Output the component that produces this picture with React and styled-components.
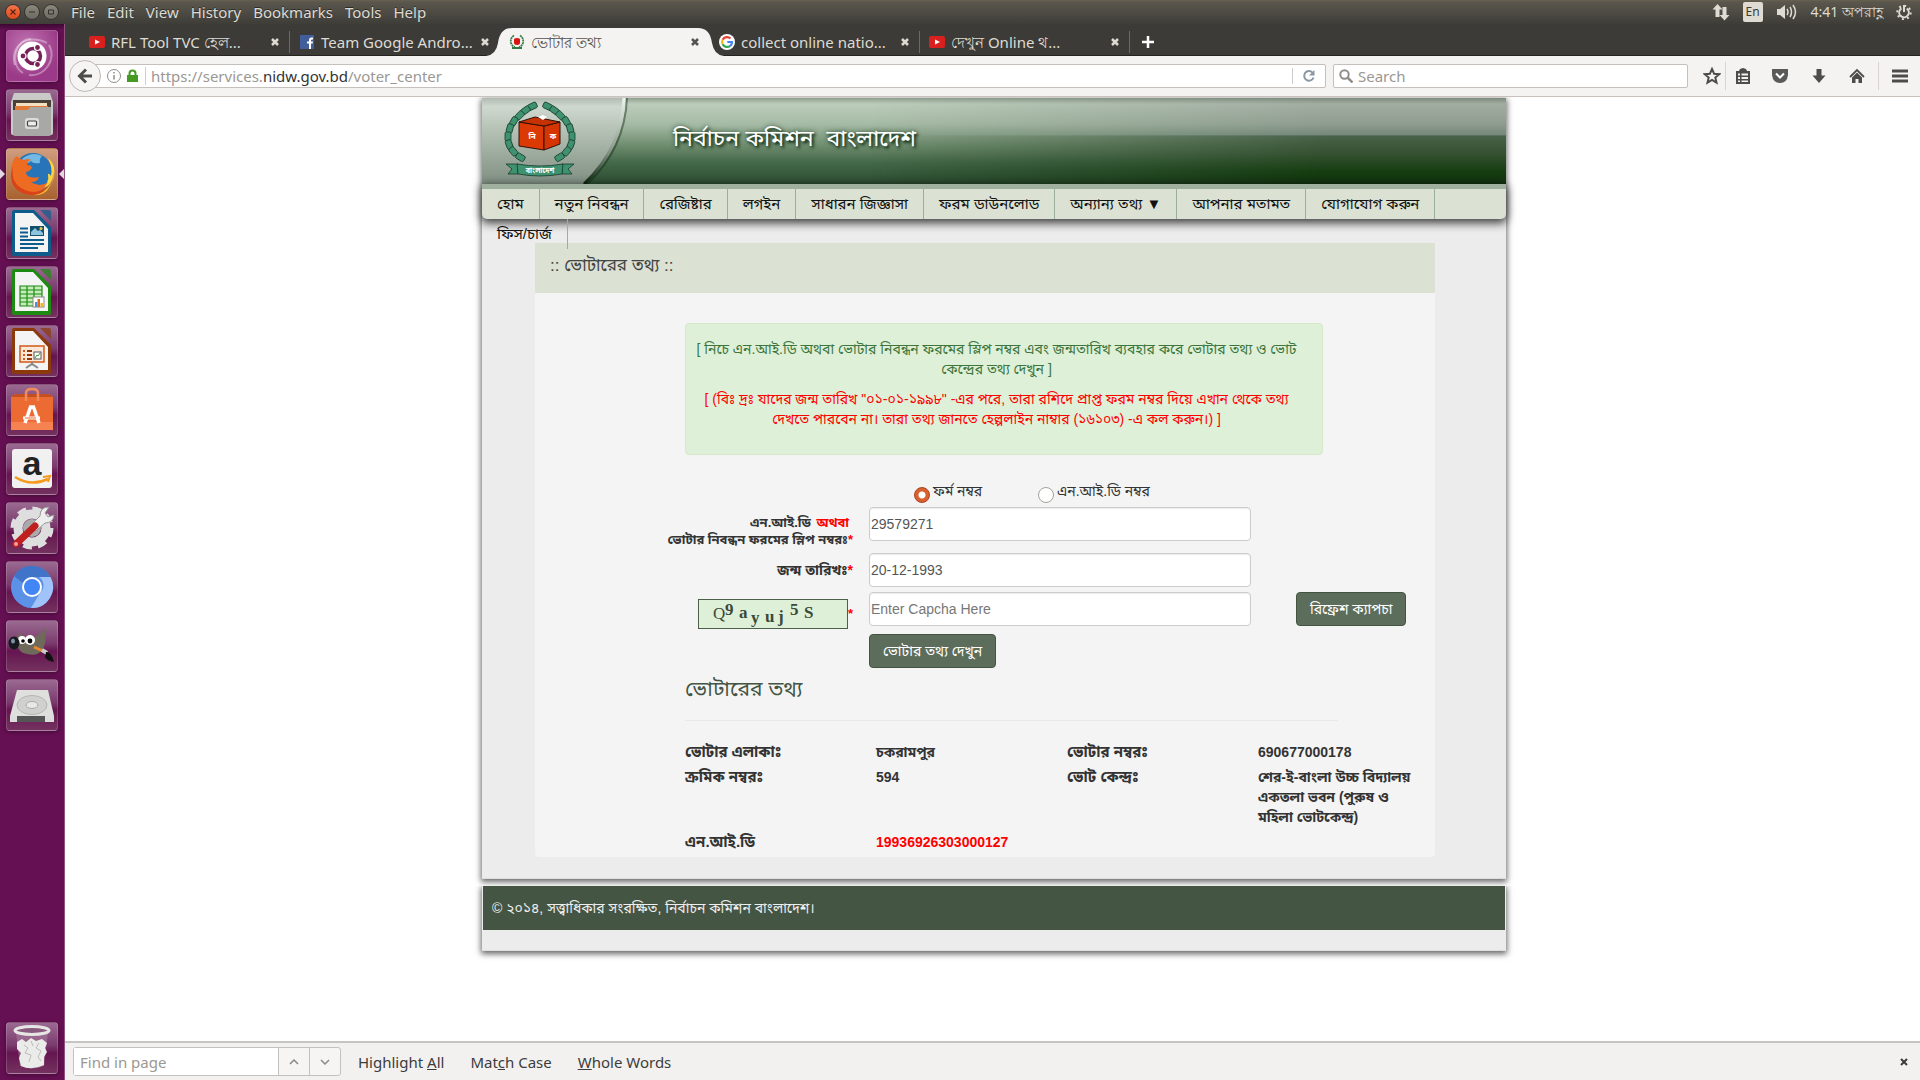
import React, { useState } from "react";
import styled, { createGlobalStyle, css } from "styled-components";

const uiFont = `"Noto Sans", "Open Sans", sans-serif`;
const pageFont = `"Liberation Sans", "Noto Sans Bengali", "Noto Sans", sans-serif`;

const GlobalStyle = createGlobalStyle`
  * { box-sizing: border-box; }
  body { margin: 0; background: #fff; }
  button, input { font: inherit; }
`;

/* ---------- desktop ---------- */

const Desktop = styled.div`
  display: flex;
  flex-direction: column;
  height: 100vh;
  font-family: ${uiFont};
  font-size: 15px;
`;

const MenuBar = styled.header`
  display: flex;
  align-items: center;
  flex: none;
  height: 24px;
  padding: 0 8px 0 5px;
  background: linear-gradient(#66614f 0, #5b574e 2px, #3e3d38 100%);
  color: #dfdbd2;
`;

const WindowButtons = styled.div`
  display: flex;
  gap: 3px;
  margin-right: 12px;
`;

const WindowButton = styled.button`
  display: grid;
  place-items: center;
  width: 16px;
  height: 16px;
  padding: 0;
  border: 1px solid #34332e;
  border-radius: 50%;
  background: ${(p) => (p.$close ? "linear-gradient(#f4734a, #df4a1c)" : "linear-gradient(#8b887c, #6c6a61)")};
`;

const Menus = styled.nav`
  display: flex;
  gap: 12px;
  flex: 1;
`;

const MenuButton = styled.button`
  padding: 0;
  border: 0;
  background: none;
  color: inherit;
  line-height: 20px;
  text-shadow: 0 -1px 0 #2c2b27;
`;

const Indicators = styled.div`
  display: flex;
  align-items: center;
  gap: 13px;
`;

const Keyboard = styled.span`
  width: 20px;
  height: 20px;
  border-radius: 2px;
  background: #dfdbd2;
  color: #3c3b37;
  font-size: 12px;
  line-height: 20px;
  text-align: center;
`;

const Clock = styled.time`
  font-size: 14px;
  line-height: 20px;
  white-space: nowrap;
`;

const Workspace = styled.div`
  display: flex;
  flex: 1;
  min-height: 0;
`;

const Launcher = styled.aside`
  display: flex;
  flex-direction: column;
  flex: none;
  gap: 7px;
  width: 65px;
  padding: 6px 6px 6px;
  border-right: 1px solid #8f5382;
  background: linear-gradient(#3a0830 0, #651052 6px);
`;

const Tile = styled.button`
  position: relative;
  width: 52px;
  height: 52px;
  padding: 0;
  border: 1px solid rgba(255, 255, 255, 0.17);
  border-radius: 4px;
  background: ${(p) => p.$bg || "linear-gradient(#9a6a91 0, #7a3a6d 45%, #651550 60%, #74325f 100%)"};
  box-shadow: 0 1px 4px rgba(0, 0, 0, 0.35);
  ${(p) => p.$last && css`margin-top: auto;`}
  svg { display: block; width: 50px; height: 50px; }
  ${(p) => p.$active && css`
    &::before, &::after {
      content: "";
      position: absolute;
      top: 20px;
      border: 5px solid transparent;
    }
    &::before { left: -7px; border-left-color: #e2d8df; border-right: 0; }
    &::after { right: -7px; border-right-color: #e2d8df; border-left: 0; }
  `}
`;

const Browser = styled.section`
  display: flex;
  flex-direction: column;
  flex: 1;
  min-width: 0;
`;

/* ---------- browser chrome ---------- */

const TabStrip = styled.div`
  display: flex;
  flex: none;
  height: 32px;
  padding-left: 15px;
  background: #3d3b37;
  box-shadow: inset 0 -1px 0 #252420;
`;

const TabBox = styled.div`
  position: relative;
  display: flex;
  align-items: center;
  gap: 6px;
  flex: 0 1 210px;
  min-width: 0;
  padding: 4px 8px 0 9px;
  color: ${(p) => (p.$active ? "#55534f" : "#dedbd3")};
  ${(p) => !p.$active && !p.$beforeActive && css`
    background: linear-gradient(#6c6a65, #6c6a65) right 7px / 1px 22px no-repeat;
  `}
`;

const TabShape = styled.svg`
  position: absolute;
  left: -14px;
  top: 4px;
  width: 238px;
  height: 28px;
`;

const TabIcon = styled.span`
  position: relative;
  display: flex;
  flex: none;
  width: 16px;
`;

const TabLabel = styled.span`
  position: relative;
  flex: 1;
  min-width: 0;
  line-height: 22px;
  white-space: nowrap;
`;

const CloseButton = styled.button`
  position: relative;
  display: grid;
  place-items: center;
  flex: none;
  width: 14px;
  height: 14px;
  padding: 0;
  border: 0;
  background: none;
  color: inherit;
`;

const NewTab = styled(CloseButton)`
  width: 36px;
  height: 32px;
  padding-top: 3px;
  color: #fff;
`;

const Toolbar = styled.div`
  display: flex;
  align-items: center;
  flex: none;
  height: 41px;
  padding: 0 0 0 4px;
  border-bottom: 1px solid #c9c1bb;
  background: #f4f3f1;
  color: #4a4a4a;
`;

const BackButton = styled.button`
  position: relative;
  z-index: 1;
  display: grid;
  place-items: center;
  flex: none;
  width: 32px;
  height: 32px;
  margin-right: -10px;
  padding: 0;
  border: 1px solid #bdb9b5;
  border-radius: 50%;
  background: #f6f5f4;
`;

const UrlBar = styled.div`
  display: flex;
  align-items: center;
  flex: 1;
  height: 24px;
  padding-left: 15px;
  border: 1px solid #c5c0bb;
  border-radius: 2px;
  background: #fff;
  color: #9b9893;
`;

const UrlText = styled.span`
  flex: 1;
  margin-left: 6px;
  padding-left: 5px;
  border-left: 1px solid #cfcdca;
  line-height: 18px;
  b { color: #333; font-weight: 400; }
`;

const Reload = styled.button`
  display: grid;
  place-items: center;
  width: 33px;
  height: 16px;
  padding: 0;
  border: 0;
  border-left: 1px solid #cfcdca;
  background: none;
`;

const SearchBox = styled.label`
  display: flex;
  align-items: center;
  gap: 5px;
  width: 355px;
  height: 24px;
  margin: 0 10px 0 7px;
  padding-left: 5px;
  border: 1px solid #c5c0bb;
  border-radius: 2px;
  background: #fff;
`;

const PlainInput = styled.input`
  flex: 1;
  min-width: 0;
  padding: 0;
  border: 0;
  outline: 0;
  background: none;
  color: #4a4a4a;
  &::placeholder { color: #9b9893; opacity: 1; }
`;

const ToolButton = styled.button`
  display: grid;
  place-items: center;
  width: ${(p) => p.$w || 38}px;
  height: 28px;
  padding: 0;
  border: 0;
  ${(p) => p.$divided && css`border-left: 1px solid #d8d5d2;`}
  background: none;
  color: #4c4c4c;
`;

const FindBar = styled.div`
  display: flex;
  align-items: center;
  flex: none;
  height: 39px;
  padding: 0 9px 0 8px;
  border-top: 2px solid #c7c5c1;
  background: #f2f1ef;
  color: #3c3c3c;
`;

const FindGroup = styled.div`
  display: flex;
  height: 29px;
  margin-right: 17px;
  border: 1px solid #c3c1bd;
  border-radius: 3px;
  background: #f6f5f4;
`;

const FindInput = styled(PlainInput)`
  flex: none;
  width: 204px;
  padding-left: 6px;
  background: #fff;
`;

const FindStep = styled.button`
  display: grid;
  place-items: center;
  width: 31px;
  padding: 0;
  border: 0;
  border-left: 1px solid #c3c1bd;
  background: none;
`;

const FindOption = styled.button`
  margin-right: 26px;
  padding: 0;
  border: 0;
  background: none;
  color: inherit;
  line-height: 20px;
`;

const Spacer = styled.span`
  flex: 1;
`;

/* ---------- web page ---------- */

const Page = styled.main`
  flex: 1;
  min-height: 0;
  overflow: hidden;
  padding: 1px 0 0 3px;
  background: #fff;
  color: #333;
  font-family: ${pageFont};
  font-size: 14px;
  line-height: 20px;
`;

const Sheet = styled.div`
  max-width: 1024px;
  margin: 0 auto;
  padding-bottom: 21px;
  border-bottom: 1px solid #ddd;
  background: #ececec;
  box-shadow: 0 2px 6px 1px rgba(0, 0, 0, 0.6);
`;

const Banner = styled.div`
  position: relative;
  display: flex;
  align-items: center;
  height: 86px;
  background: linear-gradient(#8fa08f 0, #bccdbb 6px, #a6bba6 30%, #6f8d6f 55%, #44684a 75%, #2c4c31 100%);
  &::before {
    content: "";
    position: absolute;
    inset: 0;
    background: linear-gradient(#7d8a7c 0, #a1ada1 6px, #8f9d8f 30%, #75887a 43%, #49624a 44%, #33502f 66%, #153c10 86%, #12330f 100%);
    mask-image: linear-gradient(90deg, transparent 38%, #000 82%);
  }
`;

const Emblem = styled.svg`
  position: relative;
  width: 150px;
  height: 86px;
`;

const SiteTitle = styled.h1`
  position: relative;
  margin: 0 0 6px 41px;
  color: #fff;
  font-size: 23px;
  font-weight: 400;
  line-height: 36px;
  text-shadow: 2px 2px 3px #143016, 0 0 5px #24452a;
`;

const SiteNav = styled.nav`
  position: relative;
  height: 35px;
  border-top: 5px solid #9fb09f;
  border-radius: 0 0 5px 5px;
  background: #dbe1d3;
  box-shadow: 0 3px 10px 1px rgba(0, 0, 0, 0.75);
`;

const NavList = styled.ul`
  display: flex;
  flex-wrap: wrap;
  margin: 0;
  padding: 0;
  list-style: none;
`;

const NavLink = styled.a`
  display: block;
  height: 30px;
  padding: 0 15px;
  border-right: 1px solid #9bb09c;
  color: #111;
  font-size: 15px;
  line-height: 29px;
  text-decoration: none;
  white-space: nowrap;
`;

const Panel = styled.section`
  margin: 24px 71px 0 53px;
  border-radius: 0 0 4px 4px;
  background: #f4f4f4;
`;

const PanelTitle = styled.h2`
  height: 50px;
  margin: 0 0 30px;
  padding: 12px 15px;
  background: #dbe1d3;
  color: #444;
  font-size: 17px;
  font-weight: 400;
  line-height: 22px;
`;

const Notice = styled.div`
  max-width: 638px;
  height: 132px;
  margin: 0 112px 26px 150px;
  padding: 15px 21px 0 6px;
  border: 1px solid #d6e9c6;
  border-radius: 4px;
  background: #dff0d8;
  color: #3c763d;
  text-align: center;
  p { margin: 0 0 10px; white-space: nowrap; }
  p + p { color: #f00; }
`;

const Choices = styled.div`
  display: flex;
  height: 26px;
  padding-left: 379px;
`;

const Choice = styled.label`
  display: flex;
  gap: 3px;
  width: 124px;
  line-height: 20px;
  white-space: nowrap;
`;

const Radio = styled.input`
  appearance: none;
  flex: none;
  width: 16px;
  height: 16px;
  margin: 6px 0 0;
  border: 1px solid #a6a19b;
  border-radius: 50%;
  background: #fff;
  &:checked {
    border-color: #a8431d;
    background: radial-gradient(circle, #fff 0 3px, #d9602f 4px);
  }
`;

const Fields = styled.div`
  display: grid;
  grid-template-columns: 318px minmax(0, 382px) auto;
  column-gap: 16px;
  row-gap: 5px;
  align-items: start;
`;

const Required = styled.span`
  color: #f00;
`;

const FieldLabel = styled.label`
  padding-top: 7px;
  font-size: ${(p) => (p.$small ? 13 : 14)}px;
  font-weight: 700;
  line-height: ${(p) => (p.$small ? 17 : 20)}px;
  text-align: right;
  white-space: nowrap;
`;

const Accent = styled.span`
  margin: 0 4px 0 2px;
  color: #f00;
`;

const TextInput = styled.input`
  width: 100%;
  height: 34px;
  padding: 0 1px;
  border: 1px solid #ccc;
  border-radius: 4px;
  background: #fff;
  box-shadow: inset 0 1px 1px rgba(0, 0, 0, 0.08);
  color: #555;
  &::placeholder { color: #777; opacity: 1; }
`;

const Button = styled.button`
  justify-self: start;
  height: 34px;
  padding: 0 13px;
  border: 1px solid #435541;
  border-radius: 4px;
  background: #5d6d5b;
  color: #fff;
  line-height: 20px;
  white-space: nowrap;
  ${(p) => p.$apart && css`margin-left: 29px;`}
  ${(p) => p.$wide && css`grid-column: 2;`}
`;

const CaptchaCell = styled.label`
  display: flex;
  align-items: center;
  justify-content: flex-end;
  padding-top: 7px;
  font-size: 13px;
  font-weight: 700;
`;

const Captcha = styled.svg`
  width: 150px;
  height: 30px;
  border: 1px solid #4c5f48;
  background: #dff0d8;
  font-family: "Liberation Serif", serif;
  font-size: 17px;
`;

const SectionTitle = styled.h3`
  margin: 10px 0 0 150px;
  color: #445544;
  font-size: 21px;
  font-weight: 400;
  line-height: 22px;
`;

const Rule = styled.hr`
  margin: 20px 97px 21px 150px;
  border: 0;
  border-top: 1px solid #e9e9e9;
`;

const VoterTable = styled.table`
  width: calc(100% - 150px);
  margin-left: 150px;
  border-collapse: collapse;
  table-layout: fixed;
  th, td {
    width: 191px;
    padding: 0 0 5px;
    font-weight: 700;
    text-align: left;
    vertical-align: top;
    white-space: nowrap;
  }
  th { font-size: 15px; }
  th:last-child, td:last-child { width: auto; }
`;

const FooterSheet = styled.footer`
  max-width: 1024px;
  margin: 7px auto 0;
  padding: 0 1px 20px;
  border-bottom: 1px solid #ddd;
  background: #ececec;
  box-shadow: 0 2px 6px 1px rgba(0, 0, 0, 0.6);
  clip-path: inset(0 -10px -14px -10px);
`;

const Copyright = styled.p`
  height: 44px;
  margin: 0;
  padding: 0 9px;
  background: #445544;
  color: #eee;
  line-height: 44px;
`;

/* ---------- drawings ---------- */

const DashIcon = () => (
  <svg viewBox="0 0 50 50">
    <g fill="none" stroke="#fff" strokeOpacity=".35" strokeWidth="2">
      <path d="M8 34C2 14 22 2 40 12" /><path d="M16 42c-14-8-8-34 8-34" /><path d="M42 14c8 14-4 32-20 30" />
    </g>
    <circle cx="25" cy="25" r="14.500" fill="#fff" />
    <circle cx="26" cy="25" r="7.500" fill="none" stroke="#772159" strokeWidth="3.500" />
    <g fill="#772159" stroke="#fff" strokeWidth="1.200"><circle cx="16" cy="25" r="3" /><circle cx="30.500" cy="16.500" r="3" /><circle cx="30.500" cy="33.500" r="3" /></g>
  </svg>
);

const FilesIcon = () => (
  <svg viewBox="0 0 50 50">
    <path d="M7 3h36l3 9v31q0 2-2 2H6q-2 0-2-2V12z" fill="#c9c9c7" />
    <path d="M6 10h38v12H6z" fill="#4a4038" /><path d="M9 13h31v6H9z" fill="#f4dfc0" /><path d="M8 16h33v5H8z" fill="#e27a35" />
    <path d="M6 20h15l2-3h21v27q0 2-2 2H8q-2 0-2-2z" fill="#a8a8a6" />
    <rect x="18" y="28" width="14" height="11" rx="2.500" fill="#dcdcda" /><rect x="20.500" y="31" width="9" height="5" rx="1" fill="#eee" stroke="#444" strokeWidth="1.200" />
  </svg>
);

const FirefoxIcon = () => (
  <svg viewBox="0 0 50 50">
    <circle cx="26" cy="23" r="19" fill="#2874b8" /><path d="M15 10q10-8 20-3-3 3-2 7-7 1-9-2-4 5-9-2z" fill="#73b9e4" />
    <path d="M41 9q5 10 3 18-2-3-3-2 2 10-8 14 12 0 14-16Q47 41 28 46 50 40 47 18q-2-6-6-9z" fill="#ffd53d" />
    <path d="M43 12q6 12 1 22-6 11-18 12Q44 48 46 24q0-7-3-12z" fill="#f9b52f" />
    <path d="M9 7q4 3 8 4 4-2 7 0-4 1-4 5 5 0 5 3-2 3-6 4 0 4 4 5 6 1 9 0-1 5-8 5 9 6 17 0Q35 44 24 44 5 42 4 23 4 14 9 7z" fill="#ee6b22" />
    <path d="M6 17Q3 35 18 41q12 5 22-3-6 9-17 8Q3 43 4 24z" fill="#d8431a" />
  </svg>
);

const docIcon = (color, content) => (
  <svg viewBox="0 0 50 50">
    <path d="M7 2h20l17 17v27q0 2-2 2H7q-2 0-2-2V4q0-2 2-2z" fill={color} />
    <path d="M33 2h9q2 0 2 2v9z" fill={color} opacity=".7" />
    <path d="M8 5h18l15 16v23H8z" fill="#f4f4f4" />
    {content}
  </svg>
);

const WriterIcon = () => docIcon("#0e5c8c", <>
  <path d="M13 19.500h8M13 23.500h8M13 27.500h8M13 31h24M13 35h24M13 39h18" transform="translate(0 1)" stroke="#0e5c8c" strokeWidth="2" />
  <rect x="23" y="18" width="14" height="10" fill="#12506e" /><path d="M24 27v-3l4-4 3 3 2-1 3 3v2z" fill="#8cc4e0" /><circle cx="34" cy="20.500" r="1.500" fill="#f6c83c" />
</>);

const CalcIcon = () => docIcon("#1d8a12", <>
  <rect x="13" y="19" width="22" height="20" fill="#c4ecb8" /><path d="M13 19h22v20H13zM13 23h22M13 27h22M13 31h22M13 35h22M20 19v20M27 19v20" fill="none" stroke="#1d8a12" strokeWidth="1.200" />
  <rect x="26" y="30" width="11" height="10" fill="#fff" stroke="#888" /><path d="M28 40v-5h2.500v5z" fill="#4a90d9" /><path d="M30.500 40v-8H33v8z" fill="#e06a1e" /><path d="M33.500 40v-4H36v4z" fill="#edb52c" />
</>);

const ImpressIcon = () => docIcon("#8c3a0c", <>
  <rect x="13" y="20" width="24" height="16" fill="#fde7d8" stroke="#cf5a17" strokeWidth="1.500" />
  <path d="M16 25h2M16 29h2M16 33h2" stroke="#cf5a17" strokeWidth="2" /><path d="M20 25h5M20 29h5M20 33h5" stroke="#8c3a0c" strokeWidth="2" />
  <rect x="27" y="26" width="7" height="7" fill="#fff" stroke="#555" /><path d="M28 32l2-3 1 1 2-3" fill="none" stroke="#32a32a" /><path d="M25 36v3M19 42l6-4 6 4" fill="none" stroke="#888" strokeWidth="2" />
</>);

const SoftwareIcon = () => (
  <svg viewBox="0 0 50 50">
    <path d="M4 12l4-3h34l4 3v33H4z" fill="#ec6b33" /><path d="M4 12l4-3h34l4 3z" fill="#c54f1e" /><path d="M4 37h42v8H4z" fill="#f58250" />
    <path d="M19 16V8q0-4 6-4t6 4v8" fill="none" stroke="#f08a5f" strokeWidth="2.500" />
    <path d="M18 38l5.500-16h3L32 38" fill="none" stroke="#fff" strokeWidth="3.500" /><path d="M16 33h17" stroke="#fff" strokeWidth="3" /><path d="M18 33h11" stroke="#ec6b33" strokeWidth="1" />
  </svg>
);

const AmazonIcon = () => (
  <svg viewBox="0 0 50 50">
    <rect x="5" y="5" width="40" height="39" rx="3" fill="#f1f1f1" />
    <text x="25" y="31" textAnchor="middle" fontFamily="Liberation Sans, sans-serif" fontWeight="700" fontSize="34" fill="#222">a</text>
    <path d="M8 33q16 10 33 2" fill="none" stroke="#f7981d" strokeWidth="2.500" /><path d="M36 33l7-1-2 6" fill="none" stroke="#f7981d" strokeWidth="2" />
  </svg>
);

const SettingsIcon = () => (
  <svg viewBox="0 0 50 50">
    <circle cx="25" cy="25" r="18.500" fill="none" stroke="#dedede" strokeWidth="6" strokeDasharray="8.500 6" />
    <circle cx="25" cy="25" r="14" fill="none" stroke="#dedede" strokeWidth="9" /><circle cx="25" cy="25" r="9" fill="#aaa" />
    <path d="M24 22l9-9q0-9 9-9l-4 6 3 4 6-2q-1 8-9 8l-9 8z" fill="#eee" stroke="#999" /><path d="M9 41l19-18" stroke="#c01f1f" strokeWidth="7" strokeLinecap="round" /><circle cx="9" cy="41" r="2" fill="#f6a0a0" />
  </svg>
);

const ChromiumIcon = () => (
  <svg viewBox="0 0 50 50">
    <circle cx="25" cy="25" r="21" fill="#5c91e8" /><path d="M7 14A21 21 0 0 1 43.500 15H25a10 10 0 0 0-9 6z" fill="#3f74c8" />
    <path d="M43.500 15A21 21 0 0 1 24 46l9-15a10 10 0 0 0-1-16z" fill="#a0c3fb" /><circle cx="25" cy="25" r="10" fill="#fff" /><circle cx="25" cy="25" r="8" fill="#4285f4" />
  </svg>
);

const GimpIcon = () => (
  <svg viewBox="0 0 50 50">
    <path d="M10 22l2-12q3 5 8 7 12 1 18-11 2 14-2 22-5 8-16 5-9-1-10-11z" fill="#6f695c" />
    <circle cx="15" cy="19" r="4" fill="#fff" /><circle cx="23" cy="19" r="5" fill="#fff" /><circle cx="16" cy="20" r="1.800" /><circle cx="23" cy="20" r="2.400" />
    <ellipse cx="7" cy="22" rx="5.500" ry="6.500" fill="#16191d" /><ellipse cx="6" cy="20" rx="2" ry="2.500" fill="#7d93a4" />
    <path d="M27 26l9 4" stroke="#e8892b" strokeWidth="3" /><path d="M35 29l5 3" stroke="#ccc" strokeWidth="4" /><path d="M39 31q5-1 8 10-7-1-9-5z" fill="#111" />
  </svg>
);

const DriveIcon = () => (
  <svg viewBox="0 0 50 50">
    <path d="M10 10h31l6 26H3z" fill="#dfdfdd" /><path d="M3 36h44v6H3z" fill="#555" /><path d="M3 36h7v6H3zM38 36h9v6h-9z" fill="#ddd" />
    <ellipse cx="25" cy="25" rx="15" ry="9.500" fill="#d0d0ce" stroke="#b5b5b3" /><ellipse cx="25" cy="25" rx="6" ry="3.500" fill="#e8e8e8" stroke="#aaa" />
  </svg>
);

const TrashIcon = () => (
  <svg viewBox="0 0 50 50">
    <path d="M9 9l4 34q12 5 24 0l4-34z" fill="#a67c9c" fillOpacity=".6" />
    <path d="M10 19l5-3 4 3 5-4 5 3 6-2 5 4-2 5 2 4-3 5v8q-12 6-23 1l-2-8 2-5-4-4z" fill="#ebebe9" /><path d="M17 22l4 3-3 5 6 2-2 7M32 20l-3 5 5 3-3 6 3 4M24 18l2 5" fill="none" stroke="#bbb" />
    <ellipse cx="25" cy="7.500" rx="17" ry="4" fill="#8a5a7e" stroke="#e6e6e4" strokeWidth="3" />
  </svg>
);

const Cross = ({ size = 8, width = 2.5 }) => (
  <svg width={size} height={size} viewBox="0 0 8 8"><path d="M1 1l6 6M7 1L1 7" stroke="currentColor" strokeWidth={width} /></svg>
);

const YouTubeIcon = () => (
  <svg width="16" height="14" viewBox="0 0 16 14"><rect y="1" width="16" height="12" rx="2" fill="#d8201f" /><path d="M6 4.500l5 2.500-5 2.500z" fill="#fff" /></svg>
);
const FacebookIcon = () => (
  <svg width="16" height="16" viewBox="0 0 16 16"><rect x="1" y="1" width="14" height="14" fill="#415e9b" /><path d="M10 15V9.500H8v-2h2V6q0-2.500 2.500-2.500H14v2h-1q-1 0-1 1v1h2l-.4 2H12V15z" fill="#fff" /></svg>
);
const GoogleIcon = () => (
  <svg width="16" height="16" viewBox="0 0 16 16"><circle cx="8" cy="8" r="8" fill="#fff" />
    <g fill="none" strokeWidth="2.200"><path d="M11.500 4.500A5 5 0 0 0 3.600 5.700" stroke="#ea4335" /><path d="M3.600 5.700a5 5 0 0 0 0 4.600" stroke="#fbbc05" /><path d="M3.600 10.300a5 5 0 0 0 7.600 1.500" stroke="#34a853" /><path d="M11.200 11.800A5 5 0 0 0 13 8H8.300" stroke="#4285f4" /></g></svg>
);
const CommissionIcon = () => (
  <svg width="16" height="16" viewBox="0 0 16 16"><path d="M5 1.500Q1 4 2 9q1 3 4 4M11 1.500q4 2.500 3 7.500-1 3-4 4" fill="none" stroke="#3b7d4d" strokeWidth="1.800" strokeDasharray="2 .6" /><path d="M5 5.500Q5 4 8 4t3 1.500v3Q11 11 8 11T5 8.500z" fill="#d9140e" /><path d="M3 13h10v2H3z" fill="#2f7a45" /></svg>
);

const leaves = [
  [51, 8, -25], [44, 12, -35], [38, 17, -45], [32, 23, -60], [28, 30, -75], [26, 38, -90], [27, 46, -110], [31, 53, -130], [38, 59, -150],
];

const EmblemArt = () => (
  <Emblem viewBox="0 0 150 86" role="img" aria-label="বাংলাদেশ নির্বাচন কমিশন">
    <defs>
      <linearGradient id="silver" x1="0" y1="0" x2="0" y2="1"><stop offset="0" stopColor="#b1bbb1" /><stop offset=".1" stopColor="#cfd8cf" /><stop offset=".4" stopColor="#b3bfb3" /><stop offset="1" stopColor="#7f8f82" /></linearGradient>
      <linearGradient id="edge" x1="0" y1="0" x2="0" y2="1"><stop offset="0" stopColor="#eef3ee" /><stop offset=".6" stopColor="#8c9a8c" /><stop offset="1" stopColor="#0b240d" /></linearGradient>
    </defs>
    <path d="M0 0h146q-2 50-39 86H0z" fill="#0e2a10" opacity=".45" />
    <path d="M0 0h144q-2 50-41 86H0z" fill="url(#silver)" />
    <path d="M142 0q-2 50-40 86" fill="none" stroke="url(#edge)" strokeWidth="3" />
    <g fill="#3f9270" stroke="#173a2b" strokeWidth=".8">
      {leaves.map(([x, y, r]) => (
        <React.Fragment key={y}>
          <rect x={x - 5} y={y - 3} width="9" height="6" rx="1.500" transform={`rotate(${r} ${x} ${y})`} />
          <rect x={112 - x} y={y - 3} width="9" height="6" rx="1.500" transform={`rotate(${-r} ${116 - x} ${y})`} />
        </React.Fragment>
      ))}
      <path d="M24 66h12v10H26l4-5zM92 66H80v10h10l-4-5z" />
      <path d="M35 66q23 4 46 0l-1 10q-22 4-44 0z" />
    </g>
    <g stroke="#321008" strokeWidth="1"><path d="M37 24l25 4v24l-25-4z" fill="#dc3a04" /><path d="M62 28l16-4v22l-16 6z" fill="#d43503" /><path d="M37 24l16-5 25 5-16 4z" fill="#c63204" /></g>
    <path d="M56 19l5-2 4 2-4 3z" fill="#fff" />
    <g fill="#fff" fontSize="8" fontFamily="Noto Sans Bengali, Noto Sans, sans-serif" fontWeight="700" textAnchor="middle"><text x="50" y="41">নি</text><text x="71" y="41">ক</text><text x="58" y="75" fontSize="7">বাংলাদেশ</text></g>
  </Emblem>
);

/* ---------- data ---------- */

const menus = ["File", "Edit", "View", "History", "Bookmarks", "Tools", "Help"];

const apps = [
  { name: "Dash", Icon: DashIcon, bg: "radial-gradient(circle at 40% 30%, #c277b4, #9b3a88 70%)" },
  { name: "Files", Icon: FilesIcon },
  { name: "Firefox", Icon: FirefoxIcon, bg: "linear-gradient(#cf9d7f, #a9622f)", active: true },
  { name: "Writer", Icon: WriterIcon },
  { name: "Calc", Icon: CalcIcon },
  { name: "Impress", Icon: ImpressIcon },
  { name: "Software", Icon: SoftwareIcon },
  { name: "Amazon", Icon: AmazonIcon },
  { name: "Settings", Icon: SettingsIcon },
  { name: "Chromium", Icon: ChromiumIcon },
  { name: "GIMP", Icon: GimpIcon },
  { name: "Drive", Icon: DriveIcon },
  { name: "Trash", Icon: TrashIcon, last: true },
];

const tabs = [
  { title: "RFL Tool TVC হেল...", Icon: YouTubeIcon },
  { title: "Team Google Andro...", Icon: FacebookIcon, beforeActive: true },
  { title: "ভোটার তথ্য", Icon: CommissionIcon, active: true },
  { title: "collect online natio...", Icon: GoogleIcon },
  { title: "দেখুন Online থ...", Icon: YouTubeIcon },
];

const navItems = [
  "হোম", "নতুন নিবন্ধন", "রেজিষ্টার", "লগইন", "সাধারন জিজ্ঞাসা", "ফরম ডাউনলোড",
  "অন্যান্য তথ্য ▼", "আপনার মতামত", "যোগাযোগ করুন", "ফিস/চার্জ",
];

const captchaGlyphs = [
  ["Q", 14, 19, 400], ["9", 26, 15, 700], ["a", 40, 18, 700], ["y", 52, 23, 700], ["u", 66, 22, 700], ["j", 79, 22, 700], ["5", 91, 15, 700], ["S", 105, 18, 700],
];

export default function App() {
  const [kind, setKind] = useState("form");
  return (
    <>
      <GlobalStyle />
      <Desktop>
        <MenuBar>
          <WindowButtons>
            <WindowButton $close aria-label="Close window"><svg width="8" height="8" viewBox="0 0 8 8"><path d="M1.500 1.500l5 5M6.500 1.500l-5 5" stroke="#5b2410" strokeWidth="1.200" /></svg></WindowButton>
            <WindowButton aria-label="Minimize"><svg width="8" height="8" viewBox="0 0 8 8"><path d="M1 4h6" stroke="#33322d" /></svg></WindowButton>
            <WindowButton aria-label="Maximize"><svg width="8" height="8" viewBox="0 0 8 8"><path d="M1.500 2h5v4h-5z" fill="none" stroke="#33322d" /></svg></WindowButton>
          </WindowButtons>
          <Menus>{menus.map((m) => <MenuButton key={m}>{m}</MenuButton>)}</Menus>
          <Indicators>
            <svg width="18" height="18" viewBox="0 0 18 18" fill="#dfdbd2"><path d="M5.500 1L10.500 6.500H7.500V14h-4V6.500h-3zM12.500 17.500l-5-5.500h3V4h4v8h3z" /></svg>
            <Keyboard>En</Keyboard>
            <svg width="22" height="18" viewBox="0 0 22 18"><path d="M1 6h3l5-4v14l-5-4H1z" fill="#dfdbd2" /><path d="M11 6q2 3 0 6M14 4q3 5 0 10M17 2q5 7 0 14" fill="none" stroke="#dfdbd2" strokeWidth="1.500" /></svg>
            <Clock>4:41 অপরাহ্ণ</Clock>
            <svg width="16" height="16" viewBox="0 0 16 16" fill="none" stroke="#dfdbd2"><circle cx="8" cy="8.500" r="4.800" strokeWidth="2" strokeDasharray="24 6.200" transform="rotate(-55 8 8.500)" /><path d="M8 1v7" strokeWidth="2" /><circle cx="8" cy="8.500" r="6.700" strokeWidth="2" strokeDasharray="2 3.260" /></svg>
          </Indicators>
        </MenuBar>
        <Workspace>
          <Launcher>
            {apps.map(({ name, Icon, bg, active, last }) => (
              <Tile key={name} aria-label={name} $bg={bg} $active={active} $last={last}><Icon /></Tile>
            ))}
          </Launcher>
          <Browser>
            <TabStrip>
              {tabs.map(({ title, Icon, active, beforeActive }) => (
                <TabBox key={title} $active={active} $beforeActive={beforeActive}>
                  {active && (
                    <TabShape viewBox="0 0 238 28" preserveAspectRatio="none">
                      <path d="M0 28q10-1 12-13Q14 0 26 0h186q12 0 14 15 2 12 12 13z" fill="#f4f3f1" />
                    </TabShape>
                  )}
                  <TabIcon><Icon /></TabIcon>
                  <TabLabel>{title}</TabLabel>
                  <CloseButton aria-label={`Close ${title}`}><Cross /></CloseButton>
                </TabBox>
              ))}
              <NewTab aria-label="New tab"><svg width="14" height="14" viewBox="0 0 14 14"><path d="M7 1v12M1 7h12" stroke="currentColor" strokeWidth="2.500" /></svg></NewTab>
            </TabStrip>
            <Toolbar>
              <BackButton aria-label="Back"><svg width="16" height="16" viewBox="0 0 16 16" fill="none" stroke="#4c4c4c" strokeWidth="3"><path d="M9 1.500L2.500 8 9 14.500M3 8h12" /></svg></BackButton>
              <UrlBar>
                <svg width="14" height="14" viewBox="0 0 14 14" fill="none" stroke="#8f8d89"><circle cx="7" cy="7" r="6.500" /><path d="M7 6v4.500M7 3v1.500" strokeWidth="1.500" /></svg>
                <svg width="18" height="14" viewBox="0 0 18 14"><path d="M6 6h11v7H6z" fill="#459a21" /><path d="M8.500 7V4.500q0-3 3-3t3 3V7" fill="none" stroke="#459a21" strokeWidth="2" /></svg>
                <UrlText>https://services.<b>nidw.gov.bd</b>/voter_center</UrlText>
                <Reload aria-label="Reload"><svg width="14" height="14" viewBox="0 0 14 14"><path d="M11.500 8.500A4.800 4.800 0 1 1 10.500 3.600" fill="none" stroke="#8797a3" strokeWidth="2" /><path d="M12.500 1v5.500H7z" fill="#8797a3" /></svg></Reload>
              </UrlBar>
              <SearchBox>
                <svg width="14" height="14" viewBox="0 0 14 14" fill="none" stroke="#8f8d89" strokeWidth="2"><circle cx="5.500" cy="5.500" r="4.200" /><path d="M8.500 8.500l5 5" strokeWidth="2.500" /></svg>
                <PlainInput placeholder="Search" aria-label="Search" />
              </SearchBox>
              <ToolButton $w={27} aria-label="Bookmark"><svg width="18" height="18" viewBox="0 0 18 18"><path d="M9 2l2.100 4.700 5.100.5-3.900 3.400 1.200 5L9 13l-4.500 2.600 1.200-5L1.800 7.200l5.100-.5z" fill="none" stroke="currentColor" strokeWidth="2" /></svg></ToolButton>
              <ToolButton $w={34} $divided aria-label="Bookmarks menu"><svg width="16" height="16" viewBox="0 0 16 16"><path d="M1 3h3l1-2 3-1 3 1 1 2h3v13H1z" fill="currentColor" /><path d="M3 5.500h2v2H3zM3 9h2v2H3zM3 12.500h2v1.500H3zM6.500 5.500H13v2H6.500zM6.500 9H13v2H6.500zM6.500 12.500H13V14H6.500z" fill="#f4f3f1" /></svg></ToolButton>
              <ToolButton $w={42} aria-label="Pocket"><svg width="18" height="16" viewBox="0 0 18 16"><path d="M1 1h16v6q-1 8-8 8T1 7z" fill="#5a5a5a" /><path d="M5 5.500L9 9.500l4-4" fill="none" stroke="#fff" strokeWidth="2" /></svg></ToolButton>
              <ToolButton $w={35} aria-label="Downloads"><svg width="16" height="16" viewBox="0 0 16 16"><path d="M5.500 1h5v6.500h4L8 15 1.500 7.500h4z" fill="currentColor" /></svg></ToolButton>
              <ToolButton $w={42} aria-label="Home"><svg width="16" height="16" viewBox="0 0 16 16"><path d="M1 9l7-7 7 7" fill="none" stroke="currentColor" strokeWidth="1.800" /><path d="M3 9.500l5-5 5 5V15H9.500v-4h-3v4H3z" fill="currentColor" /></svg></ToolButton>
              <ToolButton $w={42} $divided aria-label="Menu"><svg width="16" height="16" viewBox="0 0 16 16"><path d="M0 3h16M0 8h16M0 13h16" stroke="currentColor" strokeWidth="3" /></svg></ToolButton>
            </Toolbar>

            <Page>
              <Sheet>
                <Banner>
                  <EmblemArt />
                  <SiteTitle>নির্বাচন কমিশন&nbsp; বাংলাদেশ</SiteTitle>
                </Banner>
                <SiteNav>
                  <NavList>{navItems.map((n) => <li key={n}><NavLink href="#">{n}</NavLink></li>)}</NavList>
                </SiteNav>
                <Panel>
                  <PanelTitle>:: ভোটারের তথ্য ::</PanelTitle>
                  <Notice>
                    <p>[ নিচে এন.আই.ডি অথবা ভোটার নিবন্ধন ফরমের স্লিপ নম্বর এবং জন্মতারিখ ব্যবহার করে ভোটার তথ্য ও ভোট<br />কেন্দ্রের তথ্য দেখুন ]</p>
                    <p>[ (বিঃ দ্রঃ যাদের জন্ম তারিখ "০১-০১-১৯৯৮" -এর পরে, তারা রশিদে প্রাপ্ত ফরম নম্বর দিয়ে এখান থেকে তথ্য<br />দেখতে পারবেন না। তারা তথ্য জানতে হেল্পলাইন নাম্বার (১৬১০৩) -এ কল করুন।) ]</p>
                  </Notice>
                  <form onSubmit={(e) => e.preventDefault()}>
                    <Choices>
                      <Choice><Radio type="radio" name="kind" checked={kind === "form"} onChange={() => setKind("form")} />ফর্ম নম্বর</Choice>
                      <Choice><Radio type="radio" name="kind" checked={kind === "nid"} onChange={() => setKind("nid")} />এন.আই.ডি নম্বর</Choice>
                    </Choices>
                    <Fields>
                      <FieldLabel htmlFor="slip" $small>এন.আই.ডি <Accent>অথবা</Accent><br />ভোটার নিবন্ধন ফরমের স্লিপ নম্বরঃ<Required>*</Required></FieldLabel>
                      <TextInput id="slip" defaultValue="29579271" />
                      <span />
                      <FieldLabel htmlFor="dob">জন্ম তারিখঃ<Required>*</Required></FieldLabel>
                      <TextInput id="dob" defaultValue="20-12-1993" />
                      <span />
                      <CaptchaCell htmlFor="captcha">
                        <Captcha viewBox="0 0 148 28" fill="#3b4a38">
                          {captchaGlyphs.map(([c, x, y, w]) => <text key={c} x={x} y={y} fontWeight={w}>{c}</text>)}
                        </Captcha>
                        <Required>*</Required>
                      </CaptchaCell>
                      <TextInput id="captcha" placeholder="Enter Capcha Here" />
                      <Button type="button" $apart>রিফ্রেশ ক্যাপচা</Button>
                      <Button type="submit" $wide>ভোটার তথ্য দেখুন</Button>
                    </Fields>
                  </form>
                  <SectionTitle>ভোটারের তথ্য</SectionTitle>
                  <Rule />
                  <VoterTable>
                    <tbody>
                      <tr><th scope="row">ভোটার এলাকাঃ</th><td>চকরামপুর</td><th scope="row">ভোটার নম্বরঃ</th><td>690677000178</td></tr>
                      <tr><th scope="row">ক্রমিক নম্বরঃ</th><td>594</td><th scope="row">ভোট কেন্দ্রঃ</th><td>শের-ই-বাংলা উচ্চ বিদ্যালয়<br />একতলা ভবন (পুরুষ ও<br />মহিলা ভোটকেন্দ্র)</td></tr>
                      <tr><th scope="row">এন.আই.ডি</th><td><Required>19936926303000127</Required></td><td /><td /></tr>
                    </tbody>
                  </VoterTable>
                </Panel>
              </Sheet>
              <FooterSheet><Copyright>© ২০১৪, সত্ত্বাধিকার সংরক্ষিত, নির্বাচন কমিশন বাংলাদেশ।</Copyright></FooterSheet>
            </Page>

            <FindBar>
              <FindGroup>
                <FindInput placeholder="Find in page" aria-label="Find in page" />
                <FindStep aria-label="Previous"><svg width="10" height="8" viewBox="0 0 10 8"><path d="M1 6l4-4 4 4" fill="none" stroke="#8a8884" strokeWidth="1.500" /></svg></FindStep>
                <FindStep aria-label="Next"><svg width="10" height="8" viewBox="0 0 10 8"><path d="M1 2l4 4 4-4" fill="none" stroke="#8a8884" strokeWidth="1.500" /></svg></FindStep>
              </FindGroup>
              <FindOption>Highlight <u>A</u>ll</FindOption>
              <FindOption>Mat<u>c</u>h Case</FindOption>
              <FindOption><u>W</u>hole Words</FindOption>
              <Spacer />
              <CloseButton aria-label="Close find bar"><Cross width={2} /></CloseButton>
            </FindBar>
          </Browser>
        </Workspace>
      </Desktop>
    </>
  );
}
